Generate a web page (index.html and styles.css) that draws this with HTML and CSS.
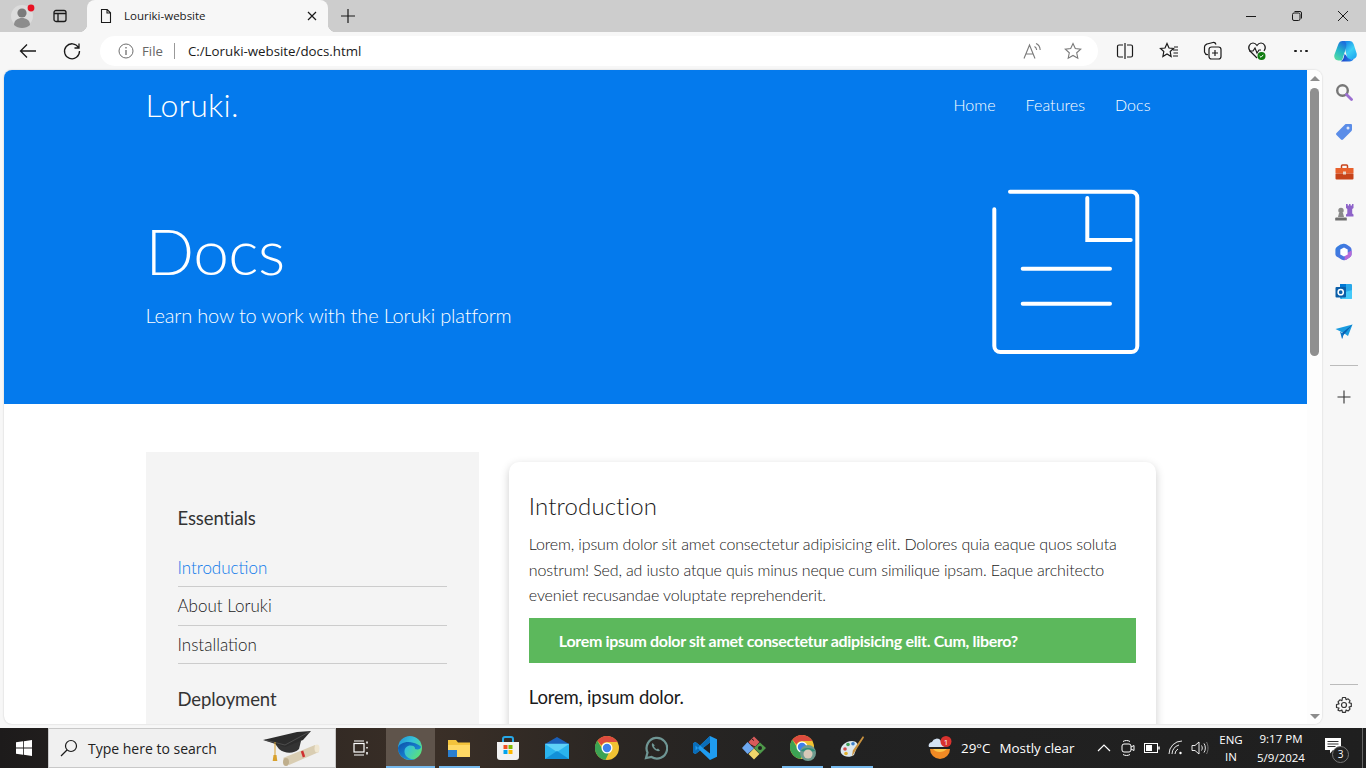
FILE: index.html
```html
<!DOCTYPE html>
<html>
<head>
    <title>Louriki-website</title>
    <link rel="stylesheet" href="styles.css">
</head>
<body>
    <div class="screen">
        <!-- Tab strip -->
        <div class="tabstrip">
            <div class="avatar-cell">
                <svg width="28" height="28" viewBox="0 0 28 28"><circle cx="14" cy="14" r="11" fill="#dcdcdc"/><circle cx="14" cy="11" r="4.6" fill="#7b7b7b"/><path d="M6 23c0-5 4-7 8-7s8 2 8 7c-2 2-5 3-8 3s-6-1-8-3z" fill="#8c8c8c"/><circle cx="23" cy="6" r="3.4" fill="#e81123"/></svg>
            </div>
            <div class="vtabs-cell">
                <svg width="16" height="16" viewBox="0 0 16 16" fill="none" stroke="#1a1a1a" stroke-width="1.3"><rect x="2" y="2.5" width="12" height="11" rx="2"/><path d="M2 5.5h12M6 5.5v8"/></svg>
            </div>
            <div class="tab">
                <svg width="16" height="16" viewBox="0 0 16 16" fill="none" stroke="#1a1a1a" stroke-width="1.1"><path d="M3.5 1.5h5.7l3.3 3.3v9.7h-9zM9 1.5v3.5h3.5"/></svg>
                <span class="tab-title">Louriki-website</span>
                <svg class="tab-close" width="10" height="10" viewBox="0 0 10 10" stroke="#1a1a1a" stroke-width="1.2"><path d="M1 1l8 8M9 1l-8 8"/></svg>
            </div>
            <div class="newtab-cell">
                <svg width="16" height="16" viewBox="0 0 16 16" stroke="#1a1a1a" stroke-width="1.2"><path d="M8 1v14M1 8h14"/></svg>
            </div>
            <div class="win-controls">
                <div class="win-btn"><svg width="12" height="12" viewBox="0 0 12 12" stroke="#1a1a1a"><path d="M1 6.5h10"/></svg></div>
                <div class="win-btn"><svg width="12" height="12" viewBox="0 0 12 12" fill="none" stroke="#1a1a1a"><rect x="1.5" y="3" width="7.5" height="7.5" rx="1.5"/><path d="M3.5 1.5h5.5a1.5 1.5 0 0 1 1.5 1.5v5.5"/></svg></div>
                <div class="win-btn"><svg width="12" height="12" viewBox="0 0 12 12" stroke="#1a1a1a"><path d="M1 1l10 10M11 1L1 11"/></svg></div>
            </div>
        </div>

        <!-- Address bar row -->
        <div class="toolbar">
            <div class="tool tool-first"><svg width="20" height="20" viewBox="0 0 20 20" fill="none" stroke="#1a1a1a" stroke-width="1.3"><path d="M18 10H2.5M9 3.5L2.5 10 9 16.5"/></svg></div>
            <div class="tool"><svg width="20" height="20" viewBox="0 0 20 20" fill="none" stroke="#1a1a1a" stroke-width="1.3"><path d="M16.5 6.5A7.5 7.5 0 1 0 17.5 10M17 2.5v4.5h-4.5"/></svg></div>
            <div class="addressbar">
                <svg width="16" height="16" viewBox="0 0 16 16" fill="none" stroke="#6e6e6e"><circle cx="8" cy="8" r="7"/><path d="M8 7v5M8 4v1.6" stroke-width="1.3"/></svg>
                <span class="addr-file">File</span>
                <span class="addr-sep"></span>
                <span class="addr-url">C:/Loruki-website/docs.html</span>
                <svg class="addr-read" width="20" height="18" viewBox="0 0 20 18" fill="none" stroke="#7a7a7a" stroke-width="1.1"><path d="M1 16.500L6.500 3 12 16.500M3 12h7"/><path d="M11.500 4.500c1.200 .6 2 1.800 2.200 3.500M13 1.500c2.500 1 4 3.500 4.200 6.500"/></svg>
                <svg class="addr-star" width="18" height="18" viewBox="0 0 18 18" fill="none" stroke="#7a7a7a" stroke-width="1.1"><path d="M9 1.5l2.3 5 5.4.6-4 3.7 1.1 5.4L9 13.500l-4.800 2.700 1.100-5.400-4-3.700 5.400-.6z"/></svg>
            </div>
            <div class="tool tool-gap"><svg width="18" height="18" viewBox="0 0 18 18" fill="none" stroke="#1a1a1a" stroke-width="1.2"><path d="M7 3H3a1.500 1.500 0 0 0-1.500 1.500v9A1.500 1.500 0 0 0 3 15h4M11 3h4a1.500 1.500 0 0 1 1.500 1.500v9A1.500 1.500 0 0 1 15 15h-4M9 1v16"/></svg></div>
            <div class="tool"><svg width="20" height="18" viewBox="0 0 20 18" fill="none" stroke="#1a1a1a" stroke-width="1.2"><path d="M8 1.500l2 4.500 4.500.5-3.300 3 .9 5L8 12l-4.100 2.500.9-5-3.300-3 4.500-.5zM14 8h5M14.500 11h4.500M14 14h5M15 5h4"/></svg></div>
            <div class="tool"><svg width="20" height="20" viewBox="0 0 20 20" fill="none" stroke="#1a1a1a" stroke-width="1.2"><path d="M5 13.500c-2 .5-3-1-3.500-2.500L1.500 6C1.500 4 3 3.500 4 3l6-1.500c1.500-.3 2.500.5 3 2"/><rect x="6" y="6" width="12" height="12" rx="2.500"/><path d="M12 9v6M9 12h6"/></svg></div>
            <div class="tool"><svg width="20" height="20" viewBox="0 0 20 20"><path d="M10 17L3 10C0 6 3 2 6 2c2 0 3 1 4 2.500C11 3 12 2 14 2c3 0 6 4 3 8" fill="none" stroke="#1a1a1a" stroke-width="1.200"/><path d="M2 10h4l2-3 2 5 2-3h2" fill="none" stroke="#1a1a1a" stroke-width="1.100"/><circle cx="14.500" cy="15" r="4" fill="#107c10"/><path d="M12.700 15l1.300 1.300 2.300-2.500" fill="none" stroke="#fff"/></svg></div>
            <div class="tool tool-more"><span class="dot"></span><span class="dot"></span><span class="dot"></span></div>
            <div class="tool">
                <svg width="24" height="24" viewBox="0 0 24 24"><defs><linearGradient id="cp1" x1="0.6" y1="0" x2="0.2" y2="1"><stop offset="0" stop-color="#1d6fdc"/><stop offset=".5" stop-color="#25b9c8"/><stop offset="1" stop-color="#58dca0"/></linearGradient><linearGradient id="cp2" x1="0.2" y1="0" x2="0.8" y2="1"><stop offset="0" stop-color="#1a8ce8"/><stop offset=".5" stop-color="#3dd0f5"/><stop offset="1" stop-color="#1fa8f0"/></linearGradient><linearGradient id="cp3" x1="0" y1="0" x2="1" y2="0"><stop offset="0" stop-color="#1a3fc8"/><stop offset="1" stop-color="#2a90ee"/></linearGradient></defs><path d="M12 2h4.500c2 0 3.500 1.200 4.200 3.300l2.800 8.700c1 3-.8 6-4 6h-5l-2-8z" fill="url(#cp2)"/><path d="M12 2H9.500C7.500 2 6 3.200 5.300 5.300L1.500 15.500C.5 18.500 2.500 21.500 5.500 21.500H9L13 9c.6-2.500.5-5.500-1-7z" fill="url(#cp1)"/><path d="M8 22.500h8.500c2 0 3.500-1 4.500-3-2.500 1.300-5 .8-6.500-1-1-1.200-1.500-2.700-3-3.500-.5 2.500-1 6-3.500 7.500z" fill="url(#cp3)"/></svg>
            </div>
        </div>

        <div class="middle">
            <div class="webview">
                <div class="page">
                    <!-- Site header -->
                    <header class="hero">
                        <div class="container">
                            <nav class="navbar">
                                <h1 class="logo">Loruki.</h1>
                                <ul class="nav-links">
                                    <li><a href="#">Home</a></li>
                                    <li><a href="#">Features</a></li>
                                    <li><a href="#">Docs</a></li>
                                </ul>
                            </nav>
                            <div class="showcase">
                                <div>
                                    <h1 class="showcase-title">Docs</h1>
                                    <p class="showcase-sub">Learn how to work with the Loruki platform</p>
                                </div>
                                <svg class="showcase-icon" width="150" height="170" viewBox="0 0 150 170" fill="none" stroke="#fff" stroke-width="4" stroke-linecap="round"><path d="M18 3.700H139a6 6 0 0 1 6.300 6.300V158a6 6 0 0 1-6 6H8.300a6 6 0 0 1-6-6V21.300"/><path d="M95.300 10V52H138.700"/><path d="M30.700 80.700H118M30.700 115.700H118"/></svg>
                            </div>
                        </div>
                    </header>

                    <section class="docs">
                        <div class="container docs-grid">
                            <aside class="docs-side">
                                <h4>Essentials</h4>
                                <ul class="side-list">
                                    <li><a class="active" href="#">Introduction</a></li>
                                    <li><a href="#">About Loruki</a></li>
                                    <li><a href="#">Installation</a></li>
                                </ul>
                                <h4>Deployment</h4>
                            </aside>
                            <main class="card">
                                <h2>Introduction</h2>
                                <p>Lorem, ipsum dolor sit amet consectetur adipisicing elit. Dolores quia eaque quos soluta nostrum! Sed, ad iusto atque quis minus neque cum similique ipsam. Eaque architecto eveniet recusandae voluptate reprehenderit.</p>
                                <div class="alert">Lorem ipsum dolor sit amet consectetur adipisicing elit. Cum, libero?</div>
                                <h3>Lorem, ipsum dolor.</h3>
                            </main>
                        </div>
                    </section>
                </div>
                <div class="scrollbar">
                    <span class="arrow-up"></span>
                    <span class="thumb"></span>
                    <span class="arrow-down"></span>
                </div>
            </div>

            <!-- Edge sidebar -->
            <div class="edge-side">
                <div class="edge-item"><svg width="18" height="18" viewBox="0 0 18 18" fill="none"><circle cx="7.500" cy="7.500" r="5.300" stroke="#777" stroke-width="2.400"/><path d="M11.500 11.500l5 5" stroke="#9c6fd1" stroke-width="2.800" stroke-linecap="round"/></svg></div>
                <div class="edge-item"><svg width="18" height="18" viewBox="0 0 18 18"><path d="M1.500 10L10 1.500c.4-.4.900-.5 1.400-.5H16a1 1 0 0 1 1 1v4.600c0 .5-.1 1-.5 1.400L8 16.500c-.6.600-1.400.6-2 0L1.500 12c-.6-.6-.6-1.400 0-2z" fill="#5b8de8"/><circle cx="13" cy="5" r="1.500" fill="#dfe7f8"/></svg></div>
                <div class="edge-item"><svg width="19" height="16" viewBox="0 0 19 16"><path d="M6.500 4V2a1 1 0 0 1 1-1h4a1 1 0 0 1 1 1v2" fill="none" stroke="#c7431a" stroke-width="1.500"/><rect x="0.500" y="4" width="18" height="5.500" fill="#e8602c"/><rect x="0.500" y="9.500" width="18" height="6" rx="1" fill="#c7431a"/><rect x="8" y="7.500" width="3" height="3" fill="#e9d5c8"/></svg></div>
                <div class="edge-item"><svg width="19" height="18" viewBox="0 0 19 18"><path d="M11 1h1.700v1.500h1.300V1h1.500v1.500H17V1h1.500v4l-1.300 1v4.500l1.300 1v2H11v-2l1.300-1V6L11 5z" fill="#8e63c9"/><circle cx="6" cy="7.500" r="2.700" fill="#8a8a8a"/><path d="M4 10h4l1 4H3z" fill="#8a8a8a"/><path d="M1 14.500h10c.5 0 .8.400.8 1V17.500H.2v-2c0-.6.3-1 .8-1z" fill="#6e6e6e"/></svg></div>
                <div class="edge-item"><svg width="18" height="18" viewBox="0 0 18 18"><defs><linearGradient id="m365a" x1="0" y1="0" x2="1" y2="1"><stop offset="0" stop-color="#2f7fe0"/><stop offset="1" stop-color="#5f6fe0"/></linearGradient></defs><path d="M9 .8c1 0 1.800.3 2.600.8l3 1.800c1.300.8 2 2 2 3.500v4.200c0 1.500-.7 2.700-2 3.500l-3 1.800c-1.600 1-3.600 1-5.200 0l-3-1.800C1.100 13.800.4 12.600.4 11.100V6.900c0-1.500.7-2.700 2-3.500l3-1.800C7.200 1.100 8 .8 9 .8z" fill="url(#m365a)"/><path d="M9.500 17.200c.8-.1 1.500-.4 2.100-.8l3-1.800c1.300-.8 2-2 2-3.500V7.500L10 11z" fill="#b76ad8"/><path d="M5.300 6.500L9 4.400l3.700 2.100v5L9 13.600l-3.700-2.100z" fill="#fff"/></svg></div>
                <div class="edge-item"><svg width="18" height="18" viewBox="0 0 18 18"><rect x="5" y="1" width="12" height="15" rx="1" fill="#28a8ea"/><path d="M5 1h6v5H5z" fill="#0078d4"/><path d="M7 10l10-3v8a1 1 0 0 1-1 1H7z" fill="#50d9ff" opacity=".7"/><rect x="0.500" y="4" width="10.500" height="10.500" rx="1" fill="#0a5ea8"/><circle cx="5.700" cy="9.200" r="2.600" fill="none" stroke="#fff" stroke-width="1.500"/></svg></div>
                <div class="edge-item"><svg width="18" height="16" viewBox="0 0 18 16"><path d="M0.500 5L17.500 0.500 13 12 8.500 9z" fill="#1a9bdf"/><path d="M7 9l10.500-8.500L8.500 11 7 15z" fill="#0a5fb0"/><path d="M5 7.500l2 7.500 1.500-5z" fill="#0e76c8"/></svg></div>
                <div class="edge-sep edge-sep-top"></div>
                <div class="edge-item edge-plus"><svg width="14" height="14" viewBox="0 0 14 14" stroke="#333" stroke-width="1.100"><path d="M7 0.500v13M0.500 7h13"/></svg></div>
                <div class="edge-sep edge-sep-bottom"></div>
                <div class="edge-item"><svg width="18" height="18" viewBox="0 0 18 18" fill="none" stroke="#333" stroke-width="1.200"><circle cx="9" cy="9" r="2.500"/><path d="M7.500 1.500h3l.6 2.200 2-.9 1.900 1.900-1 2 2.300.7v3l-2.300.7 1 2-1.900 1.900-2-1-.6 2.400h-3l-.6-2.400-2 1L3 14.100l1-2-2.500-.6v-3L4 7.800l-1-2L4.900 3.800l2 .9z" stroke-linejoin="round"/></svg></div>
            </div>
        </div>

        <!-- Windows taskbar -->
        <div class="taskbar">
            <div class="start"><svg width="16" height="16" viewBox="0 0 16 16" fill="#fff"><path d="M0 2.300l7-1v6.300H0zM7.800 1.200L16 0v7.600H7.800zM0 8.400h7v6.300l-7-1zM7.800 8.400H16V16l-8.200-1.200z"/></svg></div>
            <div class="search">
                <svg width="18" height="18" viewBox="0 0 18 18" fill="none" stroke="#1a1a1a" stroke-width="1.200"><circle cx="11" cy="7" r="5.500"/><path d="M7 11l-6 6"/></svg>
                <span class="search-text">Type here to search</span>
                <svg class="search-art" width="58" height="36" viewBox="0 0 58 36"><path d="M10 11l6 8c6 5 15 5 20 0l2-8z" fill="#333"/><path d="M0 10L34 2l14-1-8 9-18 7z" fill="#2c2c2c"/><path d="M2 10l20 5 24-13" fill="none" stroke="#555" stroke-width=".8"/><path d="M12 12v13" stroke="#d8a02c" stroke-width="1"/><path d="M10.500 25h3l.8 6h-4.600z" fill="#d8a02c"/><path d="M20 28L52 15l4 7-30 13z" fill="#d9cdb2"/><ellipse cx="23" cy="32" rx="3" ry="4" fill="#bfae8c"/><ellipse cx="54" cy="18.500" rx="2.500" ry="4" fill="#efe6d0"/><path d="M39 21l2 6" stroke="#d03030" stroke-width="2.500"/></svg>
            </div>
            <div class="task-item task-view"><svg width="16" height="16" viewBox="0 0 16 16" fill="none" stroke="#fff" stroke-width="1.200"><rect x="1" y="3.500" width="10" height="8.500"/><path d="M1 1h10M1 15h10"/><path d="M14 1.500v2M14 7v1.500M14 12v2.500" stroke-width="1.500"/></svg></div>
            <div class="task-item task-open task-active">
                <svg width="26" height="26" viewBox="0 0 26 26"><defs><linearGradient id="edgeA" x1="0" y1="0" x2="1" y2=".7"><stop offset="0" stop-color="#1e8fd8"/><stop offset=".5" stop-color="#36c2d8"/><stop offset="1" stop-color="#5be07a"/></linearGradient><linearGradient id="edgeB" x1="0" y1="0" x2=".9" y2="1"><stop offset="0" stop-color="#0c4fa8"/><stop offset="1" stop-color="#1fa0e8"/></linearGradient></defs><circle cx="13" cy="13" r="12" fill="url(#edgeA)"/><path d="M1 13A12 12 0 0 0 18 23.900C12 25 7.500 21 7.500 16.500 7.500 13 10 10.500 13.500 10.500c3 0 5 1.500 4.500 3.500 2.500 1 6 .5 6-2.500C23 11 18 7 11.500 7 6 7 1.800 9.500 1 13z" fill="url(#edgeB)"/></svg>
            </div>
            <div class="task-item task-open">
                <svg width="24" height="22" viewBox="0 0 24 22"><path d="M1 3h8l2 2.500h12V20H1z" fill="#f3c33c"/><path d="M1 8h22v12H1z" fill="#ffd965"/><rect x="1" y="13" width="9" height="7" fill="#2a7fd0"/></svg>
            </div>
            <div class="task-item">
                <svg width="24" height="25" viewBox="0 0 24 25"><path d="M7 7V3a2 2 0 0 1 2-2h6a2 2 0 0 1 2 2v4" fill="none" stroke="#27a8e8" stroke-width="2"/><path d="M1 6h22v15a3 3 0 0 1-3 3H4a3 3 0 0 1-3-3z" fill="#f2f2f2"/><rect x="7.500" y="9" width="4" height="4" fill="#f25022"/><rect x="12.500" y="9" width="4" height="4" fill="#7fba00"/><rect x="7.500" y="14" width="4" height="4" fill="#00a4ef"/><rect x="12.500" y="14" width="4" height="4" fill="#ffb900"/></svg>
            </div>
            <div class="task-item">
                <svg width="24" height="22" viewBox="0 0 24 22"><path d="M0 7L12 0l12 7v15H0z" fill="#1a5fb8"/><path d="M0 7h24v15H0z" fill="#2ab4ee"/><path d="M0 7l12 8 12-8v-.2H0z" fill="#5ed0f7"/><path d="M0 22l12-8 12 8z" fill="#1290d8"/></svg>
            </div>
            <div class="task-item">
                <svg class="chrome" width="24" height="24" viewBox="0 0 24 24"><circle cx="12" cy="12" r="12" fill="#f1c232"/><path d="M12 0a12 12 0 0 1 10.400 6H12a6 6 0 0 0-5.500 3.500L2.400 4.700A12 12 0 0 1 12 0z" fill="#dd4b3e"/><path d="M2.400 4.700l5 8.300a5 5 0 0 0 6.500 3.700L10.400 23.900A12 12 0 0 1 2.400 4.700z" fill="#3ca354"/><circle cx="12" cy="12" r="5.500" fill="#fff"/><circle cx="12" cy="12" r="4.200" fill="#3f80ec"/></svg>
            </div>
            <div class="task-item">
                <svg width="24" height="24" viewBox="0 0 24 24" fill="none"><path d="M2 22l1.500-5.500A10.300 10.300 0 1 1 7.500 21z" stroke="#6f9694" stroke-width="2.200"/><path d="M8.500 7c-1.500 1.500-.5 4 1.500 6s4.500 3 6 1.500l-2-2-1.300.7c-1-.5-2.200-1.700-2.700-2.700l.7-1.300z" fill="#6f9694"/></svg>
            </div>
            <div class="task-item">
                <svg width="24" height="24" viewBox="0 0 24 24"><path d="M17 0l7 3.300v17.400L17 24 7 14.500 2.500 18 0 16.700V7.300L2.500 6 7 9.500z" fill="#1f9cf0"/><path d="M17 6.500L10 12l7 5.500z" fill="#222"/><path d="M0 16.700L2.500 18 7 14.500 5 12l-2.500 2.500V9.500L5 12l2-2.500L2.500 6 0 7.300z" fill="#0a6db8"/><path d="M7 9.500L17 0v6.500L10 12z" fill="#0a6db8"/></svg>
            </div>
            <div class="task-item">
                <svg width="24" height="24" viewBox="0 0 24 24"><path d="M5.500 6L12 12.500 5.500 18 0 12z" fill="#6ea8f0"/><path d="M12 .500L17.500 6 12 12 6.500 6z" fill="#d85a5a"/><path d="M18 6.500L24 12l-6 6-6-6z" fill="#4f9a4a"/><path d="M12 12.500L17.500 18 12 23.500 6.500 18z" fill="#f1d66a"/><circle cx="18" cy="12" r="2" fill="#222"/><path d="M10 3l2 1.500M9 9l4 2" stroke="#222"/></svg>
            </div>
            <div class="task-item task-open">
                <svg class="chrome" width="26" height="26" viewBox="0 0 26 26"><circle cx="12" cy="12" r="12" fill="#f1c232"/><path d="M12 0a12 12 0 0 1 10.400 6H12a6 6 0 0 0-5.500 3.500L2.400 4.700A12 12 0 0 1 12 0z" fill="#dd4b3e"/><path d="M2.400 4.700l5 8.300a5 5 0 0 0 6.500 3.700L10.400 23.900A12 12 0 0 1 2.400 4.700z" fill="#3ca354"/><circle cx="12" cy="12" r="5.500" fill="#fff"/><circle cx="12" cy="12" r="4.200" fill="#3f80ec"/><circle cx="18" cy="18" r="8" fill="#6e9a8e"/><path d="M11 16c1-4 13-4 14 0l-7 1z" fill="#2f8f7a"/><circle cx="18" cy="19" r="4.500" fill="#d8c8b8"/></svg>
            </div>
            <div class="task-item task-open">
                <svg width="26" height="26" viewBox="0 0 26 26"><path d="M2 18C0 12 6 6 13 6c4 0 7 3 5 6l-3 8c-4 3-11 2-13-2z" fill="#dce8ef"/><circle cx="6" cy="14" r="1.800" fill="#d04a4a"/><circle cx="9" cy="9.500" r="1.800" fill="#3fa05a"/><circle cx="14" cy="8.800" r="1.800" fill="#3f80c8"/><circle cx="7" cy="18.500" r="1.800" fill="#e0b030"/><path d="M24 1l1 1.500-9 14-3 5 .8-6z" fill="#c9923f"/></svg>
            </div>

            <div class="tray">
                <div class="weather">
                    <svg class="weather-icon" width="24" height="24" viewBox="0 0 24 24"><path d="M2 13h20a10 10 0 0 1-20 0z" fill="#f08a24"/><path d="M5 13c3 4 10 4 14 0z" fill="#f9c64b"/><path d="M1 11a3.500 3.500 0 0 1 3-5 5 5 0 0 1 9-1 3 3 0 0 1 3 6z" fill="#d4e2f2"/><circle cx="18" cy="5.500" r="5.500" fill="#d9322e"/><text x="18" y="8.500" class="badge-num">1</text></svg>
                    <span class="weather-temp">29°C</span>
                    <span class="weather-text">Mostly clear</span>
                </div>
                <div class="tray-icon"><svg width="14" height="14" viewBox="0 0 14 14" fill="none" stroke="#fff" stroke-width="1.200"><path d="M1 10l6-6 6 6"/></svg></div>
                <div class="tray-icon"><svg width="16" height="18" viewBox="0 0 16 18" fill="none" stroke="#fff" stroke-width="1"><rect x="2" y="5" width="9" height="8" rx="2"/><path d="M11 8l3-1.500v5L11 10M3 2.500c2-1.300 5-1.300 7 0M3 15.500c2 1.300 5 1.300 7 0"/></svg></div>
                <div class="tray-icon"><svg width="16" height="12" viewBox="0 0 16 12" fill="none" stroke="#fff"><rect x="0.500" y="1.500" width="13" height="9"/><rect x="2" y="3" width="6" height="6" fill="#fff" stroke="none"/><path d="M15 4.500v3" stroke-width="1.500"/></svg></div>
                <div class="tray-icon"><svg width="16" height="16" viewBox="0 0 16 16" fill="none" stroke="#fff"><path d="M1 14a13 13 0 0 1 13-13M4 14a10 10 0 0 1 7-9M7 14a6 6 0 0 1 3-5" stroke-width=".9"/><circle cx="12.500" cy="13" r="1.200" fill="#fff" stroke="none"/></svg></div>
                <div class="tray-icon"><svg width="18" height="16" viewBox="0 0 18 16" fill="none" stroke="#fff"><path d="M1 5.500h3L8 2v12l-4-3.500H1zM10.500 5.500c1 1.500 1 3.500 0 5M13 3.500c1.800 2.500 1.800 6.500 0 9" stroke-width=".9"/><path d="M15.500 2c2 3.500 2 8.500 0 12" stroke="#888" stroke-width=".8"/></svg></div>
                <div class="lang"><span>ENG</span><span>IN</span></div>
                <div class="clock"><span>9:17 PM</span><span>5/9/2024</span></div>
                <div class="notify">
                    <svg width="18" height="16" viewBox="0 0 18 16"><path d="M0 0h16v12H8l-3 3.500V12H0z" fill="#fff"/><path d="M2.500 3.500h11M2.500 6h11M2.500 8.500h8" stroke="#333"/></svg>
                    <span class="notify-count">3</span>
                </div>
                <div class="show-desktop"></div>
            </div>
        </div>
    </div>
</body>
</html>
```

FILE: styles.css
```css
* {
    box-sizing: border-box;
    margin: 0;
    padding: 0;
}
html, body {
    height: 100%;
    overflow: hidden;
    background: #fff;
}
ul {
    list-style: none;
}
a {
    text-decoration: none;
    color: inherit;
}
.screen {
    width: 1366px;
    height: 768px;
    display: flex;
    flex-direction: column;
    font-family: "Open Sans", "Noto Sans", sans-serif;
    overflow: hidden;
}

/* tab strip */
.tabstrip {
    height: 32px;
    background: #cdcdcd;
    display: flex;
    align-items: stretch;
}
.avatar-cell {
    width: 44px;
    display: flex;
    align-items: center;
    justify-content: center;
}
.vtabs-cell {
    width: 32px;
    display: flex;
    align-items: center;
    justify-content: center;
}
.tab {
    position: relative;
    width: 241px;
    margin-left: 11px;
    background: #f7f7f7;
    border-radius: 8px 8px 0 0;
    display: flex;
    align-items: center;
    padding: 0 11px 0 11px;
}
.tab::before, .tab::after {
    content: "";
    position: absolute;
    bottom: 0;
    width: 8px;
    height: 8px;
}
.tab::before {
    left: -8px;
    background: radial-gradient(circle at 0 0, #cdcdcd 8px, #f7f7f7 8.5px);
}
.tab::after {
    right: -8px;
    background: radial-gradient(circle at 100% 0, #cdcdcd 8px, #f7f7f7 8.5px);
}
.tab-title {
    margin-left: 10px;
    padding-bottom: 2px;
    font-size: 11.5px;
    color: #1a1a1a;
    flex: 1;
}
.newtab-cell {
    width: 40px;
    display: flex;
    align-items: center;
    justify-content: center;
}
.win-controls {
    margin-left: auto;
    display: flex;
}
.win-btn {
    width: 46px;
    display: flex;
    align-items: center;
    justify-content: center;
}

/* toolbar */
.toolbar {
    height: 38px;
    background: #f7f7f7;
    display: flex;
    align-items: center;
}
.tool {
    width: 44px;
    height: 30px;
    display: flex;
    align-items: center;
    justify-content: center;
    flex-shrink: 0;
}
.tool-first {
    margin-left: 6px;
}
.tool-gap {
    margin-left: 5px;
}
.tool-more {
    gap: 3px;
}
.dot {
    width: 2.5px;
    height: 2.5px;
    border-radius: 50%;
    background: #1a1a1a;
}
.addressbar {
    width: 998px;
    height: 30px;
    margin-left: 6px;
    background: #fff;
    border-radius: 15px;
    display: flex;
    align-items: center;
    padding-left: 18px;
    flex-shrink: 0;
}
.addr-file {
    margin-left: 8px;
    font-size: 13.2px;
    color: #666;
}
.addr-sep {
    width: 1px;
    height: 16px;
    background: #999;
    margin: 0 13px 0 11px;
}
.addr-url {
    font-size: 13.3px;
    color: #1a1a1a;
}
.addr-read {
    margin-left: auto;
}
.addr-star {
    margin-left: 21px;
    margin-right: 16px;
}

/* browser body */
.middle {
    flex: 1;
    min-height: 0;
    display: flex;
    background: #f7f7f7;
}
.webview {
    width: 1318px;
    margin: 0 0 4px 4px;
    background: #fff;
    border-radius: 8px;
    overflow: hidden;
    display: flex;
    box-shadow: 0 0 2px rgba(0,0,0,0.2);
}
.page {
    width: 1303px;
    overflow: hidden;
    font-family: "Lato", sans-serif;
    font-weight: 300;
    font-size: 16px;
    line-height: 1.6;
    color: #1a1a1a;
}
.scrollbar {
    width: 15px;
    background: #fdfdfd;
    display: flex;
    flex-direction: column;
    align-items: center;
    padding: 6px 0 5px;
}
.arrow-up, .arrow-down {
    width: 0;
    height: 0;
    border-left: 5px solid transparent;
    border-right: 5px solid transparent;
}
.arrow-up {
    border-bottom: 5px solid #8c8c8c;
}
.arrow-down {
    border-top: 5px solid #8c8c8c;
    margin-top: auto;
}
.thumb {
    width: 9px;
    height: 268px;
    margin-top: 7px;
    background: #8f8f8f;
    border-radius: 5px;
}
.container {
    max-width: 1100px;
    margin: 0 auto;
    padding: 0 40px;
}

/* site header */
.hero {
    height: 334px;
    background: #047aed;
    color: #fff;
}
.navbar {
    height: 70px;
    display: flex;
    align-items: center;
    justify-content: space-between;
}
.logo {
    font-weight: 300;
    font-size: 32px;
    letter-spacing: 0.3px;
}
.nav-links {
    display: flex;
}
.nav-links a {
    display: block;
    padding: 10px;
    margin: 0 5px;
    letter-spacing: 0.05px;
}
.showcase {
    height: 264px;
    display: flex;
    align-items: center;
    justify-content: space-between;
    padding-right: 24px;
}
.showcase-title {
    font-weight: 300;
    font-size: 64px;
    line-height: 1.2;
    margin-bottom: 10px;
    letter-spacing: -0.5px;
}
.showcase-sub {
    font-size: 20px;
    letter-spacing: -0.17px;
}
.showcase-icon {
    margin-top: 2px;
}

/* docs section */
.docs-grid {
    display: grid;
    grid-template-columns: 1fr 2fr;
    gap: 20px;
    margin-top: 48px;
}
.docs-side {
    background: #f4f4f4;
    padding: 52px 32px;
}
.docs-side h4 {
    font-size: 18.5px;
    font-weight: 400;
    color: #333;
    letter-spacing: -0.1px;
}
.side-list {
    margin: 15px 0 21px;
    font-size: 17px;
}
.side-list li {
    padding: 6px 0;
    line-height: 25.5px;
    border-bottom: 1px solid #ccc;
}
.side-list .active {
    color: #0b78ea;
}
.card {
    margin: 10px;
    padding: 20px;
    background: #fff;
    border-radius: 10px;
    box-shadow: 0 3px 10px rgba(0,0,0,0.2);
}
.card h2 {
    font-size: 24px;
    font-weight: 300;
    margin: 5px 0 6px;
    letter-spacing: 0.15px;
}
.card p {
    line-height: 25.5px;
    letter-spacing: -0.15px;
}
.alert {
    margin: 10px 0;
    padding: 10px 30px;
    background: #5cb85c;
    color: #fff;
    font-weight: 700;
    line-height: 25px;
    letter-spacing: -0.33px;
}
.card h3 {
    font-size: 18.5px;
    font-weight: 400;
    margin-top: 20px;
    letter-spacing: -0.2px;
}

/* edge sidebar */
.edge-side {
    width: 44px;
    display: flex;
    flex-direction: column;
    align-items: center;
    padding: 2px 0 3px;
}
.edge-item {
    width: 44px;
    height: 40px;
    display: flex;
    align-items: center;
    justify-content: center;
    flex-shrink: 0;
}
.edge-sep {
    width: 28px;
    height: 1px;
    background: #bbb;
    flex-shrink: 0;
}
.edge-sep-top {
    margin-top: 13px;
}
.edge-plus {
    margin-top: 11px;
}
.edge-sep-bottom {
    margin-top: auto;
}

/* taskbar */
.taskbar {
    height: 40px;
    flex-shrink: 0;
    display: flex;
    align-items: stretch;
    background: linear-gradient(90deg, #1d1b1b 0%, #3a2f27 32%, #2a2623 45%, #222 60%, #1f1f1f 100%);
    color: #fff;
    font-family: "Open Sans", "Noto Sans", sans-serif;
}
.start {
    width: 48px;
    display: flex;
    align-items: center;
    justify-content: center;
}
.search {
    width: 288px;
    background: #f0f0f0;
    border: 1px solid #c8c8c8;
    display: flex;
    align-items: center;
    padding-left: 11px;
}
.search-text {
    margin-left: 10px;
    color: #222;
    font-size: 14px;
}
.search-art {
    margin-left: auto;
    margin-right: 14px;
}
.task-item {
    width: 49.1px;
    display: flex;
    align-items: center;
    justify-content: center;
    position: relative;
}
.task-view {
    width: 49.6px;
}
.task-open::after {
    content: "";
    position: absolute;
    left: 4px;
    right: 4px;
    bottom: 0;
    height: 2px;
    background: #76b9ed;
}
.task-active {
    background: #5f544b;
}
.task-active::after {
    left: 0;
    right: 0;
}
.tray {
    margin-left: auto;
    display: flex;
    align-items: center;
    font-size: 12px;
    height: 100%;
}
.weather {
    display: flex;
    align-items: center;
    width: 164px;
    font-size: 13.4px;
}
.weather-icon {
    margin-right: 9px;
}
.badge-num {
    font-family: "Open Sans", sans-serif;
    font-size: 8px;
    fill: #fff;
    text-anchor: middle;
}
.weather-temp {
    margin-right: 9px;
}
.tray-icon {
    width: 24px;
    display: flex;
    align-items: center;
    justify-content: center;
}
.lang {
    width: 30px;
    margin-left: 4px;
    display: flex;
    flex-direction: column;
    align-items: center;
    line-height: 17px;
    font-size: 11.5px;
}
.clock {
    width: 68px;
    margin-left: 1px;
    display: flex;
    flex-direction: column;
    align-items: center;
    line-height: 19px;
    font-size: 11.5px;
}
.notify {
    width: 47px;
    height: 100%;
    position: relative;
    display: flex;
    align-items: center;
    justify-content: center;
    padding: 0 10px 4px 0;
}
.notify-count {
    position: absolute;
    left: 17px;
    top: 18px;
    width: 17px;
    height: 17px;
    border-radius: 50%;
    background: #222;
    border: 1px solid #777;
    font-size: 10px;
    line-height: 15px;
    text-align: center;
}
.show-desktop {
    width: 1px;
    height: 100%;
    background: #666;
    margin-right: 3px;
}
```
